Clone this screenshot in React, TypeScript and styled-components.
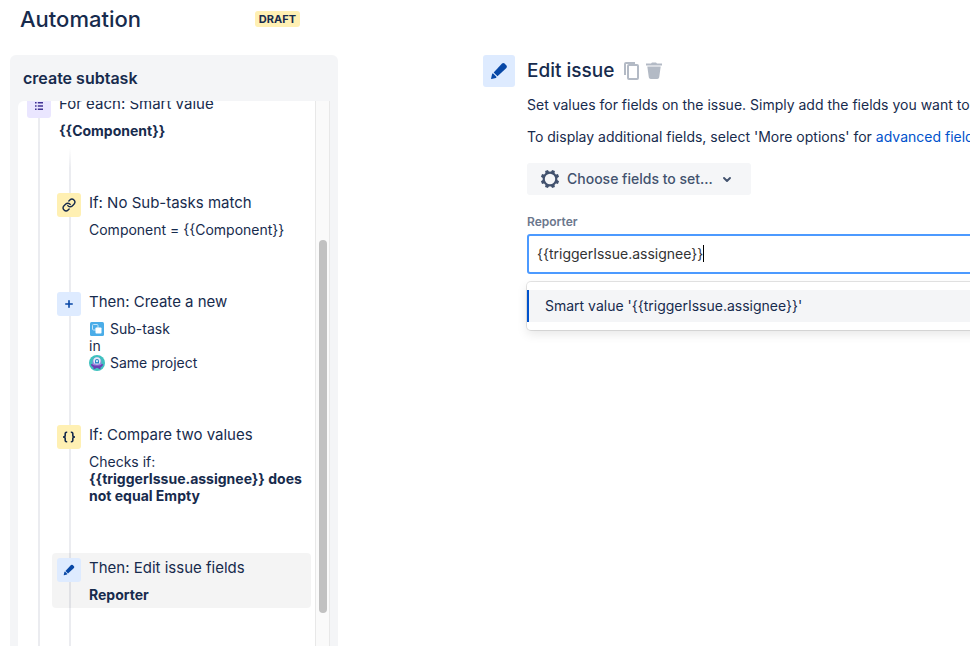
import React from "react";
import styled, { createGlobalStyle, css } from "styled-components";

const GlobalStyle = createGlobalStyle`
  *, *::before, *::after { box-sizing: border-box; }
  body {
    margin: 0;
    background: #fff;
    color: #172b4d;
    font-family: Inter, "Liberation Sans", sans-serif;
    font-size: 14px;
    line-height: 17px;
  }
  h1, h2, h3, p, ul { margin: 0; padding: 0; }
  ul { list-style: none; }
`;

const Page = styled.div`
  display: flex;
  flex-direction: column;
  height: 100vh;
  padding-left: 10px;
  overflow: hidden;
`;

const Header = styled.header`
  display: flex;
  flex: none;
  align-items: center;
  justify-content: space-between;
  width: 290px;
  height: 38px;
  margin-bottom: 17px;
  padding-left: 10px;
`;

const PageTitle = styled.h1`
  font-size: 22px;
  font-weight: 500;
  line-height: 28px;
`;

const Badge = styled.span`
  padding: 0 4px;
  border-radius: 3px;
  background: #fff0b3;
  font-size: 11px;
  font-weight: 700;
  line-height: 16px;
`;

const Body = styled.div`
  display: flex;
  flex: 1;
  gap: 145px;
  min-height: 0;
`;

const Sidebar = styled.aside`
  display: flex;
  flex: 0 0 328px;
  flex-direction: column;
  padding: 0 8px;
  border-radius: 6px 6px 0 0;
  background: #f4f5f7;
`;

const RuleName = styled.h2`
  padding: 13px 5px;
  font-size: 16px;
  font-weight: 600;
  line-height: 20px;
`;

const ScrollArea = styled.div`
  display: flex;
  flex: 1;
  min-height: 0;
  overflow: hidden;
  border-radius: 6px 0 0 0;
  background: #fff;
`;

const RuleTree = styled.div`
  flex: 1;
  align-self: flex-start;
  margin-top: -12px;
  padding: 0 4px;
  background: linear-gradient(#ebecf0, #ebecf0) 20px 24px / 2px 100% no-repeat;
`;

const Branch = styled.ul`
  display: flex;
  flex-direction: column;
  gap: 44px;
  margin-left: 30px;
  padding: 44px 0 64px;
  background: linear-gradient(#fff 4px, #ebecf0 24px) 17px 0 / 2px 100% no-repeat;
`;

const Step = styled.button<{ $selected?: boolean }>`
  display: flex;
  align-items: flex-start;
  gap: 8px;
  width: 100%;
  padding: 5px;
  border: 0;
  border-radius: 4px;
  background: ${(p) => (p.$selected ? "rgba(9, 9, 9, 0.045)" : "transparent")};
  color: inherit;
  font: inherit;
  text-align: left;
`;

const tones = {
  purple: css`background: #eae6ff; color: #403294;`,
  yellow: css`background: #fff0b3; color: #172b4d;`,
  blue: css`background: #deebff; color: #0747a6;`,
};

const IconTile = styled.span<{ $tone: keyof typeof tones; $large?: boolean }>`
  display: flex;
  flex: none;
  align-items: center;
  justify-content: center;
  width: ${(p) => (p.$large ? 32 : 24)}px;
  height: ${(p) => (p.$large ? 32 : 24)}px;
  border-radius: 3px;
  ${(p) => tones[p.$tone]}
`;

const StepText = styled.span`
  display: flex;
  flex: 1;
  flex-direction: column;
  gap: 8px;
`;

const StepTitle = styled.span`
  font-size: 15px;
  line-height: 20px;
`;

const StepDetail = styled.span<{ $strong?: boolean }>`
  display: block;
  font-weight: ${(p) => (p.$strong ? 700 : 400)};
`;

const DetailLine = styled.span`
  display: flex;
  align-items: center;
  gap: 5px;
  height: 17px;
`;

const ScrollTrack = styled.div`
  flex: 0 0 15px;
  padding: 139px 2px 0 3px;
  border: solid #e8e8e8;
  border-width: 0 1px;
  background: #fafafa;
`;

const ScrollThumb = styled.div`
  width: 8px;
  height: 373px;
  border-radius: 4px;
  background: #c1c1c1;
`;

const Main = styled.main`
  display: flex;
  flex: 1 0 auto;
  align-items: flex-start;
  gap: 12px;
`;

const Form = styled.form`
  display: flex;
  flex: 1;
  flex-direction: column;
  align-items: flex-start;
`;

const FormHead = styled.div`
  display: flex;
  align-items: center;
  height: 32px;
  margin-bottom: 8px;
`;

const FormTitle = styled.h2`
  margin-right: 9px;
  font-size: 19px;
  font-weight: 500;
  line-height: 24px;
`;

const IconButton = styled.button`
  display: flex;
  padding: 0;
  border: 0;
  background: none;
  color: #b3bac5;
`;

const Copy = styled.p`
  margin-bottom: 12px;
  line-height: 20px;
  white-space: nowrap;
`;

const Link = styled.a`
  color: #0052cc;
  text-decoration: none;
`;

const FieldPicker = styled.button`
  display: flex;
  align-items: center;
  width: 224px;
  height: 32px;
  margin: 4px 0 19px;
  padding: 0 12px 1px;
  border: 0;
  border-radius: 3px;
  background: #f5f6f8;
  color: #42526e;
  font: inherit;
  font-weight: 500;
`;

const PickerLabel = styled.span`
  margin: 0 6px;
`;

const FieldLabel = styled.label`
  margin-bottom: 4px;
  color: #6b778c;
  font-size: 12px;
  font-weight: 600;
  line-height: 16px;
`;

const InputWrap = styled.div`
  position: relative;
  width: 100%;
`;

const TextInput = styled.input`
  display: block;
  width: 100%;
  height: 40px;
  padding: 0 8px 2px;
  border: 2px solid #4c9aff;
  border-radius: 3px;
  outline: 0;
  background: #fff;
  color: #333;
  font: inherit;
`;

const Caret = styled.span`
  position: absolute;
  top: 11px;
  left: 176px;
  width: 1px;
  height: 17px;
  background: #000;
`;

const Menu = styled.ul`
  width: 100%;
  margin-top: 8px;
  padding: 8px 0;
  border-radius: 4px;
  box-shadow: 0 0 0 1px rgba(0, 0, 0, 0.1), 0 4px 11px rgba(0, 0, 0, 0.1);
`;

const Option = styled.li`
  padding: 6px 16px;
  border-left: 2px solid #0052cc;
  background: #f4f5f7;
  line-height: 20px;
`;

const ListIcon = () => (
  <svg width="12" height="12" viewBox="0 0 12 12" fill="currentColor" aria-hidden="true">
    <path d="M2 2h1.6v1.6H2zM2 5.2h1.6v1.6H2zM2 8.4h1.6V10H2zM4.8 2H10v1.6H4.8zM4.8 5.2H10v1.6H4.8zM4.8 8.4H10V10H4.8z" />
  </svg>
);

const LinkIcon = () => (
  <svg width="14" height="14" viewBox="0 0 24 24" fill="none" stroke="currentColor" strokeWidth="2.4" strokeLinecap="round" aria-hidden="true">
    <path d="M10 13a5 5 0 0 0 7.54.54l3-3a5 5 0 0 0-7.07-7.07l-1.72 1.71" />
    <path d="M14 11a5 5 0 0 0-7.54-.54l-3 3a5 5 0 0 0 7.07 7.07l1.71-1.71" />
  </svg>
);

const PlusIcon = () => (
  <svg width="8" height="8" viewBox="0 0 8 8" stroke="currentColor" strokeWidth="1.6" strokeLinecap="round" aria-hidden="true">
    <path d="M4 .8v6.4M.8 4h6.4" />
  </svg>
);

const BracesIcon = () => (
  <svg width="14" height="12" viewBox="0 0 14 12" fill="none" stroke="currentColor" strokeWidth="1.6" aria-hidden="true">
    <path d="M5.2 1.300H4.600Q3.200 1.300 3.200 2.500V4.400Q3.200 6 1 6Q3.200 6 3.200 7.600V9.500Q3.200 10.700 4.600 10.700H5.200" />
    <path d="M8.800 1.300H9.400Q10.800 1.300 10.800 2.500V4.400Q10.800 6 13 6Q10.800 6 10.800 7.600V9.500Q10.800 10.700 9.400 10.700H8.800" />
  </svg>
);

const PencilIcon = ({ size }: { size: number }) => (
  <svg width={size} height={size} viewBox="0 0 18 18" fill="currentColor" aria-hidden="true">
    <path d="M12 1.600Q13.300.500 14.600 1.600L16.400 3.400Q17.500 4.700 16.400 6L7.500 14.200 3.700 10.400Z" />
    <path d="M2.900 11.300 6.600 15 5.900 15.900 1.500 17Q1 17 1.100 16.500L2.100 12Z" />
  </svg>
);

const SubtaskIcon = () => (
  <svg width="16" height="16" viewBox="0 0 16 16" aria-hidden="true">
    <rect x="1" y="1" width="14" height="14" rx="1.500" fill="#4bade8" />
    <rect x="3.500" y="3.500" width="5.500" height="5.500" rx="1" fill="none" stroke="#c4e3f8" />
    <rect x="6.500" y="6.500" width="6" height="6" rx=".8" fill="#fff" />
  </svg>
);

const ProjectIcon = () => (
  <svg width="16" height="16" viewBox="0 0 16 16" aria-hidden="true">
    <circle cx="8" cy="8" r="8" fill="#3fc1bf" />
    <path d="M1.800 9.300Q8 7.500 14.200 9.300 13.600 12 11.500 12.600V14H9.500V13H6.500V14H4.500V12.600Q2.400 12 1.800 9.300Z" fill="#6a3fb5" />
    <path d="M3.600 9.700V6.600a4.400 4.400 0 0 1 8.800 0v3.100Q8 11.500 3.600 9.700Z" fill="#9a86dc" />
    <circle cx="8" cy="5.800" r="3.600" fill="#e4ecf7" />
    <path d="M6 8.600V6.100a2 2 0 0 1 4 0v2.500Z" fill="#2684c8" />
    <circle cx="8" cy="6.200" r="1.100" fill="#dff1fb" />
  </svg>
);

const CopyIcon = () => (
  <svg width="22" height="20" viewBox="0 0 22 20" fill="none" stroke="currentColor" strokeWidth="2" aria-hidden="true">
    <rect x="5" y="4" width="10" height="14" rx="1" />
    <path d="M2 14V3q0-1 1-1h9" />
  </svg>
);

const TrashIcon = () => (
  <svg width="18" height="20" viewBox="0 0 18 20" fill="currentColor" aria-hidden="true">
    <path d="M1 2.500h5L7 1.500h4l1 1h5v2H1zM2.300 5.500h13.400l-1.500 10.700q-.2 1.800-2 1.800H5.800q-1.800 0-2-1.800Z" />
  </svg>
);

const GearIcon = () => (
  <svg width="22" height="22" viewBox="-11 -11 22 22" aria-hidden="true">
    <circle r="6.300" fill="none" stroke="currentColor" strokeWidth="2.200" />
    {[22.5, 67.5, 112.5, 157.5, 202.5, 247.5, 292.5, 337.5].map((angle) => (
      <path key={angle} d="M-2-6.600-1.500-9.200H1.500L2-6.600Z" fill="currentColor" transform={`rotate(${angle})`} />
    ))}
  </svg>
);

const ChevronIcon = () => (
  <svg width="16" height="16" viewBox="0 0 16 16" fill="none" stroke="currentColor" strokeWidth="1.900" strokeLinecap="round" strokeLinejoin="round" aria-hidden="true">
    <path d="m5 7 3 3 3-3" />
  </svg>
);

interface RuleStepProps {
  icon: React.ReactNode;
  tone: keyof typeof tones;
  title: string;
  selected?: boolean;
  children: React.ReactNode;
}

const RuleStep = ({ icon, tone, title, selected, children }: RuleStepProps) => (
  <Step type="button" $selected={selected}>
    <IconTile $tone={tone}>{icon}</IconTile>
    <StepText>
      <StepTitle>{title}</StepTitle>
      <span>{children}</span>
    </StepText>
  </Step>
);

export default function App() {
  return (
    <>
      <GlobalStyle />
      <Page>
        <Header>
          <PageTitle>Automation</PageTitle>
          <Badge>DRAFT</Badge>
        </Header>
        <Body>
          <Sidebar>
            <RuleName>create subtask</RuleName>
            <ScrollArea>
              <RuleTree>
                <RuleStep icon={<ListIcon />} tone="purple" title="For each: Smart value">
                  <StepDetail $strong>{"{{Component}}"}</StepDetail>
                </RuleStep>
                <Branch>
                  <li>
                    <RuleStep icon={<LinkIcon />} tone="yellow" title="If: No Sub-tasks match">
                      <StepDetail>{"Component = {{Component}}"}</StepDetail>
                    </RuleStep>
                  </li>
                  <li>
                    <RuleStep icon={<PlusIcon />} tone="blue" title="Then: Create a new">
                      <DetailLine><SubtaskIcon />Sub-task</DetailLine>
                      <DetailLine>in</DetailLine>
                      <DetailLine><ProjectIcon />Same project</DetailLine>
                    </RuleStep>
                  </li>
                  <li>
                    <RuleStep icon={<BracesIcon />} tone="yellow" title="If: Compare two values">
                      <StepDetail>Checks if:</StepDetail>
                      <StepDetail $strong>{"{{triggerIssue.assignee}} does not equal Empty"}</StepDetail>
                    </RuleStep>
                  </li>
                  <li>
                    <RuleStep icon={<PencilIcon size={12} />} tone="blue" title="Then: Edit issue fields" selected>
                      <StepDetail $strong>Reporter</StepDetail>
                    </RuleStep>
                  </li>
                </Branch>
              </RuleTree>
              <ScrollTrack>
                <ScrollThumb />
              </ScrollTrack>
            </ScrollArea>
          </Sidebar>
          <Main>
            <IconTile $tone="blue" $large><PencilIcon size={18} /></IconTile>
            <Form onSubmit={(e) => e.preventDefault()}>
              <FormHead>
                <FormTitle>Edit issue</FormTitle>
                <IconButton type="button" aria-label="Duplicate"><CopyIcon /></IconButton>
                <IconButton type="button" aria-label="Delete"><TrashIcon /></IconButton>
              </FormHead>
              <Copy>Set values for fields on the issue. Simply add the fields you want to edit.</Copy>
              <Copy>
                To display additional fields, select 'More options' for <Link href="#advanced">advanced field editing</Link>.
              </Copy>
              <FieldPicker type="button">
                <GearIcon />
                <PickerLabel>Choose fields to set...</PickerLabel>
                <ChevronIcon />
              </FieldPicker>
              <FieldLabel htmlFor="reporter">Reporter</FieldLabel>
              <InputWrap>
                <TextInput id="reporter" type="text" defaultValue="{{triggerIssue.assignee}}" />
                <Caret />
              </InputWrap>
              <Menu role="listbox" aria-label="Reporter suggestions">
                <Option role="option" aria-selected="true">{"Smart value '{{triggerIssue.assignee}}'"}</Option>
              </Menu>
            </Form>
          </Main>
        </Body>
      </Page>
    </>
  );
}
